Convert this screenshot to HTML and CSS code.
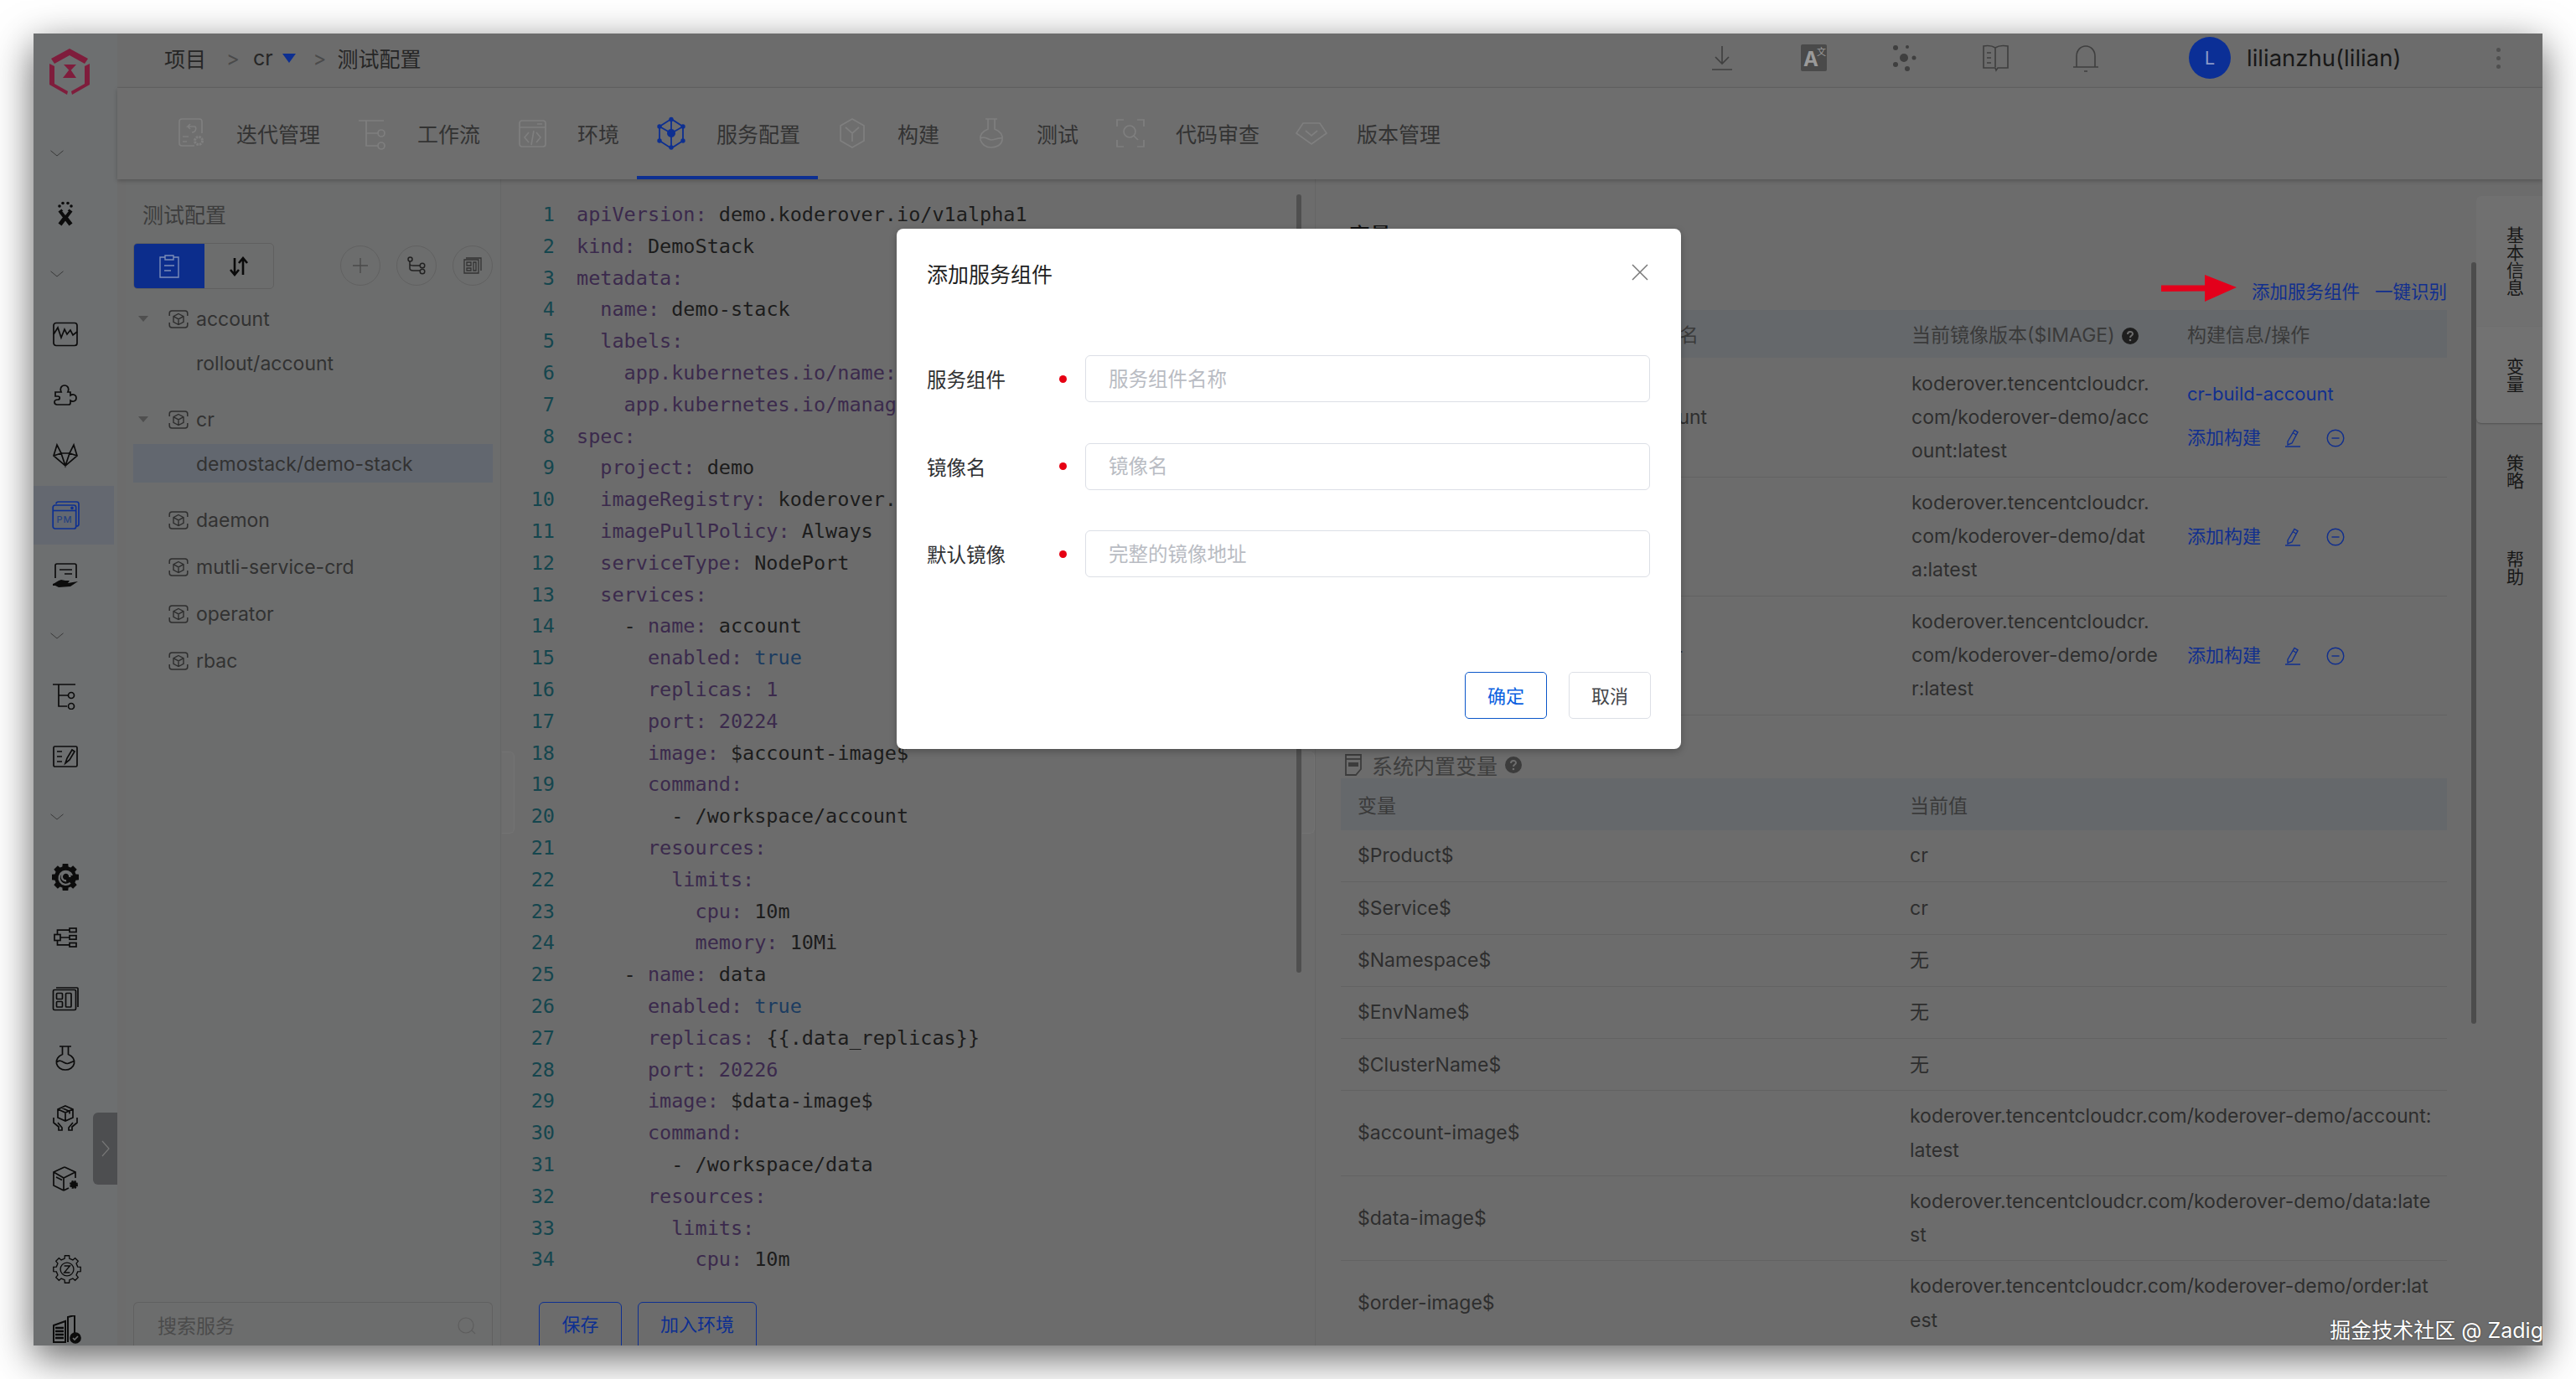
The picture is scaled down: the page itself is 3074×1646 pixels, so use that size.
FILE: index.html
```html
<!DOCTYPE html>
<html lang="zh-CN">
<head>
<meta charset="utf-8">
<title>测试配置</title>
<link rel="stylesheet" href="styles.css">
</head>
<body>
<svg class="defs" aria-hidden="true">
  <symbol id="svc" viewBox="0 0 24 24"><path d="M1.200 8V5a3 3 0 0 1 3-3h15.600a3 3 0 0 1 3 3v3M1.200 16v3a3 3 0 0 0 3 3h15.600a3 3 0 0 0 3-3v-3" fill="none" stroke="currentColor" stroke-width="1.500"/><path d="M12 5.500l6 3.200v6.600L12 18.500l-6-3.200V8.700zM6 8.700l6 3.200 6-3.200M12 11.900v6.600" fill="none" stroke="currentColor" stroke-width="1.400"/></symbol>
  <symbol id="chev" viewBox="0 0 16 8"><path d="M.5.8L8 7l7.500-6.200" fill="none" stroke="currentColor" stroke-width="1"/></symbol>
  <symbol id="pen" viewBox="0 0 22 24"><path d="M5 16L13 2.500l4 2.300L10 18l-5 2zM11 5.500l4 2.500M2 22h18" fill="none" stroke="currentColor" stroke-width="1.400"/></symbol>
  <symbol id="minus" viewBox="0 0 22 22"><circle cx="11" cy="11" r="9.800" fill="none" stroke="currentColor" stroke-width="1.400"/><path d="M6.500 11h9" stroke="currentColor" stroke-width="1.400"/></symbol>
  <symbol id="help" viewBox="0 0 20 20"><circle cx="10" cy="10" r="10" fill="currentColor"/><path d="M7 8c0-4 6-4 6-.5 0 2-3 2-3 4.500" fill="none" stroke="#6d6d6d" stroke-width="2"/><circle cx="10" cy="15" r="1.300" fill="#6d6d6d"/></symbol>
</svg>

<div class="window">
  <aside class="sidebar">
    <div class="logo">
      <svg width="80" height="80" viewBox="0 0 80 80"><path d="M17 20L39 8l22 12-4 6-18-10-18 10zM15 26l6 3v21l16 9-1 4-21-12zM63 26l-6 3v21l-16 9 1 4 21-12zM32 27h15l-7.500 8zM39.500 32l7.500 11H31z" fill="#7f1d3c"/></svg>
    </div>
    <div class="side-item"><svg class="chev" width="16" height="8"><use href="#chev"/></svg></div>
    <div class="side-item"><svg class="side-ic" viewBox="0 0 32 32"><path d="M9.500 12l13 17M22.500 12L9.500 29" stroke="#0c0c0c" stroke-width="5" fill="none"/><path d="M12 13l4 5 4-5z" fill="#6d6f70" stroke="none"/><circle cx="9" cy="7" r="1.800" fill="#0c0c0c" stroke="none"/><circle cx="13" cy="3.500" r="1.800" fill="#0c0c0c" stroke="none"/><circle cx="19" cy="3.500" r="1.800" fill="#0c0c0c" stroke="none"/><circle cx="23" cy="7" r="1.800" fill="#0c0c0c" stroke="none"/></svg></div>
    <div class="side-item"><svg class="chev" width="16" height="8"><use href="#chev"/></svg></div>
    <div class="side-item"><svg class="side-ic" viewBox="0 0 32 32"><rect x="2" y="2.500" width="28" height="27" rx="3"/><path d="M2 16L7 8l4 12 4-10 3 6 4-5 3 6 5-4"/></svg></div>
    <div class="side-item"><svg class="side-ic" viewBox="0 0 32 32"><path d="M4 13h7c-2-4 0-8 4-8s6 4 4 8h3v4c3-2 7-1 7 3s-4 5-7 3v3c0 1-1 2-2 2H6c-2 0-3-1-3-3s2-3 4-3c3 0 3-4 0-4H4z"/></svg></div>
    <div class="side-item"><svg class="side-ic" viewBox="0 0 32 32"><path d="M6 4L2 17l14 12 14-12-4-13-5 10H11zM2 17l9-3 5 15 5-15 9 3"/></svg></div>
    <div class="side-item is-active"><svg class="side-ic side-ic-lg" viewBox="0 0 34 34"><path d="M5 3.500c0-1.500 1-2.500 2.500-2.500h22c1.500 0 2.500 1 2.500 2.500v24c0 1.500-1 2.500-2.500 2.500H28"/><rect x="1.200" y="5" width="27.500" height="28" rx="2.500" fill="#636871"/><path d="M1.200 11.500h27.500" stroke-width="1.600"/><circle cx="24" cy="8.300" r="1"/><text x="15" y="26" class="pm">PM</text></svg></div>
    <div class="side-item"><svg class="side-ic" viewBox="0 0 32 32"><path d="M4 19V4c0-1 1-2 2-2h21c1 0 2 1 2 2v15M9 9h15M15 14h9"/><path d="M1 26c3-1 6-4 10-5l5 1h5l-2 3 12-2-9 6-14 1-4-2H1z" fill="#0c0c0c" stroke="none"/></svg></div>
    <div class="side-item"><svg class="chev" width="16" height="8"><use href="#chev"/></svg></div>
    <div class="side-item"><svg class="side-ic" viewBox="0 0 32 32"><path d="M1 2h27M8 2v26h10M8 15h11"/><circle cx="23" cy="15" r="3.500"/><circle cx="23" cy="28" r="3.500"/></svg></div>
    <div class="side-item"><svg class="side-ic" viewBox="0 0 32 32"><rect x="2" y="4" width="28" height="24" rx="1.500"/><path d="M6 10h6M6 16h6M6 22h6M16 24l2-6L24 8l3 2-6 10z"/></svg></div>
    <div class="side-item"><svg class="chev" width="16" height="8"><use href="#chev"/></svg></div>
    <div class="side-item"><svg class="side-ic" viewBox="0 0 30 30"><polygon class="fill-dark" points="26.200,12.400 29.300,12.700 29.300,17.300 26.200,17.600 24.750,21.100 26.700,23.500 23.500,26.700 21.100,24.750 17.600,26.200 17.300,29.300 12.700,29.300 12.400,26.200 8.900,24.750 6.500,26.700 3.300,23.500 5.250,21.100 3.800,17.600 .7,17.300 .7,12.700 3.800,12.400 5.250,8.900 3.300,6.500 6.500,3.300 8.900,5.250 12.400,3.800 12.700,.7 17.300,.7 17.600,3.800 21.100,5.250 23.500,3.300 26.700,6.500 24.750,8.900"/><circle cx="15" cy="15" r="7.800" class="fill-dark"/><path d="M22.500 13a7.500 7.500 0 1 0-2 8.500M20 15a4.500 4.500 0 1 0-4 4" stroke="#6d6f70" stroke-width="2.200"/></svg></div>
    <div class="side-item"><svg class="side-ic side-ic-tree" viewBox="0 0 28 24"><rect x="1" y="8.500" width="7" height="7"/><rect x="19" y="1" width="8" height="4.500"/><rect x="19" y="9.700" width="8" height="4.500"/><rect x="19" y="18.500" width="8" height="4.500"/><path d="M4.500 8.500V3.200H19M8 12h11M4.500 15.500v5.300H19"/></svg></div>
    <div class="side-item"><svg class="side-ic" viewBox="0 0 32 30"><path d="M5 3h25c.6 0 1 .4 1 1v22"/><rect x="1.500" y="5.500" width="27" height="24" rx="1.500"/><rect x="5.500" y="9.500" width="7" height="7" rx="1"/><rect x="5.500" y="19.500" width="7" height="6.500" rx="1"/><rect x="16.500" y="9.500" width="6.500" height="16.500" rx="1"/></svg></div>
    <div class="side-item"><svg class="side-ic" viewBox="0 0 32 32"><path d="M9 2h14M12.500 2v9.500C7.500 13.500 4.500 18 5.500 22.500 6.500 27 11 30 16 30s9.500-3 10.500-7.500c1-4.500-2-9-7-11V2M5.500 21c5-5 9 2 13 1.500 3-.4 5-2 8-3"/></svg></div>
    <div class="side-item"><svg class="side-ic" viewBox="0 0 32 32"><path d="M16 1l9 4v10l-9 4-9-4V5zM7 5l9 4 9-4M16 9v10M12 3.500l9 4v3"/><path d="M2 15v6l6 5v4h4v-3l-5-6M30 15v6l-6 5v4h-4v-3l5-6"/></svg></div>
    <div class="side-item"><svg class="side-ic" viewBox="0 0 32 32"><path d="M15 2l13 6v7M14 30L2 24V8l13-6M2 8l12 7 14-7M14 15v15M5 14l7 3.500M14 30l6-3"/><circle cx="26" cy="23" r="3.800" class="fill-dark" stroke-dasharray="2 1" stroke-width="2.500"/></svg></div>
    <div class="side-item side-gear"><svg class="side-ic side-ic-xl" viewBox="0 0 30 30"><polygon stroke-width="1.200" points="26.200,12.400 29.300,12.700 29.300,17.300 26.200,17.600 24.750,21.100 26.700,23.500 23.500,26.700 21.100,24.750 17.600,26.200 17.300,29.300 12.700,29.300 12.400,26.200 8.900,24.750 6.500,26.700 3.300,23.500 5.250,21.100 3.800,17.600 .7,17.300 .7,12.700 3.800,12.400 5.250,8.900 3.300,6.500 6.500,3.300 8.900,5.250 12.400,3.800 12.700,.7 17.300,.7 17.600,3.800 21.100,5.250 23.500,3.300 26.700,6.500 24.750,8.900"/><circle cx="15" cy="15" r="7" stroke-width="1.200"/><path d="M12 11.500h6l-6 7h6" stroke-width="1.200"/></svg></div>
    <div class="side-item"><svg class="side-ic side-ic-xl" viewBox="0 0 34 34"><path d="M1 12l14-5v25H1zM18 32V2l8-2v22" fill="none" stroke-width="2"/><path d="M3 15h10M3 19h10M3 23h10M3 27h10" stroke-width="2.500"/><circle cx="27" cy="27" r="6" class="fill-dark"/><path d="M24 27l2 2 4-4" stroke="#6d6f70" stroke-width="1.600"/></svg></div>
    <div class="collapse"><svg width="12" height="22" viewBox="0 0 12 22"><path d="M2 2l8 9-8 9" fill="none" stroke="#777" stroke-width="1.200"/></svg></div>
  </aside>

  <div class="main">
    <header class="topbar">
      <nav class="crumbs">
        <span>项目</span><span class="sep sep-a">&gt;</span><span class="crumb-cr">cr</span><span class="tri"></span><span class="sep sep-b">&gt;</span><span>测试配置</span>
      </nav>
      <div class="top-tools">
        <svg class="tool" viewBox="0 0 40 40"><path d="M20 6v21M12 19l8 8 8-8M8 34h24"/></svg>
        <svg class="tool" viewBox="0 0 40 40"><rect x="5" y="4" width="31" height="32" rx="2" fill="#4a4a4a" stroke="none"/><text x="8" y="30" class="tool-a">A</text><text x="24" y="17" class="tool-b">文</text></svg>
        <svg class="tool tool-fill" viewBox="0 0 40 40"><circle cx="20" cy="20" r="5"/><circle cx="10" cy="8" r="3"/><circle cx="24" cy="7" r="2"/><circle cx="32" cy="20" r="2.500"/><circle cx="10" cy="28" r="3"/><circle cx="24" cy="33" r="3"/></svg>
        <svg class="tool" viewBox="0 0 40 40"><path d="M20 8c-3-2-8-3-14-2v26h14l1 3 2-3h12V6c-6-1-12 0-15 2zM20 8v23M10 14h5M10 20h5M10 26h5"/></svg>
        <svg class="tool" viewBox="0 0 40 40"><path d="M5 31h30M9 31V18c0-7 5-12 11-12s11 5 11 12v13M18 36h4"/></svg>
      </div>
      <div class="user">
        <span class="avatar">L</span>
        <span class="user-name">lilianzhu(lilian)</span>
        <span class="kebab"><i></i><i></i><i></i></span>
      </div>
    </header>

    <nav class="tabs">
      <a class="tab"><svg viewBox="0 0 40 40"><path d="M24 35H9c-2 0-3-1-3-3V6c0-2 1-3 3-3h21c2 0 3 1 3 3v14"/><path d="M25 12H16l3-3M16 12l3 3M25 12c2 3 0 7-4 7M10 24h7M10 30h5"/><circle cx="29" cy="29" r="4.500" stroke-width="3" stroke-dasharray="2.500 1"/></svg>迭代管理</a>
      <a class="tab"><svg viewBox="0 0 40 40"><path d="M4 5h30M13 5v30h14M13 20h15"/><circle cx="31" cy="20" r="4"/><circle cx="31" cy="35" r="4"/></svg>工作流</a>
      <a class="tab"><svg viewBox="0 0 40 40"><rect x="5" y="5" width="31" height="31" rx="3"/><path d="M5 13h31M26 9h6M16 19l-5 6 5 6M25 19l5 6-5 6M22 17l-3 17"/></svg>环境</a>
      <a class="tab tab-on"><svg viewBox="0 0 40 40"><path d="M20 3l14 9v17l-14 9-14-9V12zM20 3v13M6 12l14 8 14-8M20 20v18" stroke-width="1.800"/><circle cx="20" cy="3.500" r="2.700"/><circle cx="34" cy="12" r="2.700"/><circle cx="34" cy="29" r="2.700"/><circle cx="20" cy="37" r="2.700"/><circle cx="6" cy="29" r="2.700"/><circle cx="6" cy="12" r="2.700"/><circle cx="20" cy="20" r="5"/></svg>服务配置</a>
      <a class="tab"><svg viewBox="0 0 40 40"><path d="M20 3l14 8v18l-14 8-14-8V11zM12 13l8 7 8-7M20 20v10"/></svg>构建</a>
      <a class="tab"><svg viewBox="0 0 40 40"><path d="M13 3h14M16 3v12C9 18 6 23 7 28c2 6 7 9 13 9s12-3 13-9c1-5-2-10-9-13V3M7 26c6-3 9 2 13 2s8-3 13-2"/></svg>测试</a>
      <a class="tab"><svg viewBox="0 0 40 40"><path d="M12 4H4v8M28 4h8v8M12 36H4v-8M28 36h8v-8"/><circle cx="19" cy="18" r="7"/><path d="M24 23l5 5"/></svg>代码审查</a>
      <a class="tab"><svg viewBox="0 0 40 40"><path d="M10 8h20l8 12-18 13L2 20zM13 17l7 6 7-6"/></svg>版本管理</a>
    </nav>

    <div class="body">
      <section class="tree-panel">
        <h2 class="panel-title">测试配置</h2>
        <div class="toolbar">
          <div class="segment">
            <span class="seg seg-on"><svg width="26" height="30" viewBox="0 0 26 30"><path d="M8 4H2v24h22V4h-6M8 2h10v5H8zM7 14h12M7 20h8" fill="none" stroke="#7c8db8" stroke-width="1.400"/></svg></span>
            <span class="seg"><svg width="24" height="24" viewBox="0 0 24 24"><path d="M7 2v19M2 16l5 6 5-6M17 22V3M12 8l5-6 5 6" fill="none" stroke="#0a0a0a" stroke-width="2.600"/></svg></span>
          </div>
          <div class="round-btns">
            <span class="round"><svg width="20" height="20" viewBox="0 0 20 20"><path d="M10 1v18M1 10h18" stroke="#4a4a4a" stroke-width="1.400"/></svg></span>
            <span class="round"><svg width="22" height="22" viewBox="0 0 22 22"><path d="M3 6v8c0 3 2 3 4 3h8M3 9c0 2 2 2 4 2h8" fill="none" stroke="#222" stroke-width="1.500"/><circle cx="3.500" cy="3.500" r="2.500" fill="none" stroke="#222" stroke-width="1.500"/><circle cx="18" cy="11" r="2.800" fill="none" stroke="#222" stroke-width="1.500"/><circle cx="18" cy="18" r="2.800" fill="none" stroke="#222" stroke-width="1.500"/></svg></span>
            <span class="round"><svg width="22" height="20" viewBox="0 0 22 20"><path d="M3 1h18v15M1 3h17v16H1z" fill="none" stroke="#333" stroke-width="1.300"/><path d="M4 6h5v4H4zM4 13h5v3H4zM12 6h3v10h-3z" fill="none" stroke="#333" stroke-width="1.300"/></svg></span>
          </div>
        </div>
        <div class="tree">
          <div class="tree-head"><span class="caret"></span><svg class="svc-ic"><use href="#svc"/></svg>account</div>
          <div class="tree-leaf">rollout/account</div>
          <div class="tree-head"><span class="caret"></span><svg class="svc-ic"><use href="#svc"/></svg>cr</div>
          <div class="tree-leaf is-selected">demostack/demo-stack</div>
          <div class="tree-head"><span class="caret caret-none"></span><svg class="svc-ic"><use href="#svc"/></svg>daemon</div>
          <div class="tree-head"><span class="caret caret-none"></span><svg class="svc-ic"><use href="#svc"/></svg>mutli-service-crd</div>
          <div class="tree-head"><span class="caret caret-none"></span><svg class="svc-ic"><use href="#svc"/></svg>operator</div>
          <div class="tree-head"><span class="caret caret-none"></span><svg class="svc-ic"><use href="#svc"/></svg>rbac</div>
        </div>
        <div class="search">
          <span>搜索服务</span>
          <svg width="24" height="22" viewBox="0 0 24 22"><circle cx="11" cy="10" r="9" fill="none" stroke="#5d5d5d" stroke-width="1.200"/><path d="M18 16l4 4" stroke="#5d5d5d" stroke-width="1.200"/></svg>
        </div>
      </section>

      <div class="splitter"><span class="split-handle"></span></div>

      <section class="editor">
        <div class="code">
<div class="ln"><b>1</b><code><i>apiVersion:</i> demo.koderover.io/v1alpha1</code></div>
<div class="ln"><b>2</b><code><i>kind:</i> DemoStack</code></div>
<div class="ln"><b>3</b><code><i>metadata:</i></code></div>
<div class="ln"><b>4</b><code>  <i>name:</i> demo-stack</code></div>
<div class="ln"><b>5</b><code>  <i>labels:</i></code></div>
<div class="ln"><b>6</b><code>    <i>app.kubernetes.io/name:</i> demo-stack</code></div>
<div class="ln"><b>7</b><code>    <i>app.kubernetes.io/managed-by:</i> zadig</code></div>
<div class="ln"><b>8</b><code><i>spec:</i></code></div>
<div class="ln"><b>9</b><code>  <i>project:</i> demo</code></div>
<div class="ln"><b>10</b><code>  <i>imageRegistry:</i> koderover.tencentcloudcr.com</code></div>
<div class="ln"><b>11</b><code>  <i>imagePullPolicy:</i> Always</code></div>
<div class="ln"><b>12</b><code>  <i>serviceType:</i> NodePort</code></div>
<div class="ln"><b>13</b><code>  <i>services:</i></code></div>
<div class="ln"><b>14</b><code>    - <i>name:</i> account</code></div>
<div class="ln"><b>15</b><code>      <i>enabled:</i> <u>true</u></code></div>
<div class="ln"><b>16</b><code>      <i>replicas: 1</i></code></div>
<div class="ln"><b>17</b><code>      <i>port: 20224</i></code></div>
<div class="ln"><b>18</b><code>      <i>image:</i> $account-image$</code></div>
<div class="ln"><b>19</b><code>      <i>command:</i></code></div>
<div class="ln"><b>20</b><code>        - /workspace/account</code></div>
<div class="ln"><b>21</b><code>      <i>resources:</i></code></div>
<div class="ln"><b>22</b><code>        <i>limits:</i></code></div>
<div class="ln"><b>23</b><code>          <i>cpu:</i> 10m</code></div>
<div class="ln"><b>24</b><code>          <i>memory:</i> 10Mi</code></div>
<div class="ln"><b>25</b><code>    - <i>name:</i> data</code></div>
<div class="ln"><b>26</b><code>      <i>enabled:</i> <u>true</u></code></div>
<div class="ln"><b>27</b><code>      <i>replicas:</i> {{.data_replicas}}</code></div>
<div class="ln"><b>28</b><code>      <i>port: 20226</i></code></div>
<div class="ln"><b>29</b><code>      <i>image:</i> $data-image$</code></div>
<div class="ln"><b>30</b><code>      <i>command:</i></code></div>
<div class="ln"><b>31</b><code>        - /workspace/data</code></div>
<div class="ln"><b>32</b><code>      <i>resources:</i></code></div>
<div class="ln"><b>33</b><code>        <i>limits:</i></code></div>
<div class="ln"><b>34</b><code>          <i>cpu:</i> 10m</code></div>
        </div>
        <div class="editor-foot">
          <button class="outline-btn btn-save">保存</button>
          <button class="outline-btn btn-join">加入环境</button>
        </div>
        <span class="editor-scroll"></span>
      </section>

      <div class="splitter splitter-right"><span class="split-handle"></span></div>

      <section class="detail">
        <h3 class="detail-title">变量</h3>
        <div class="detail-actions">
          <svg class="red-arrow" width="90" height="32" viewBox="0 0 90 32"><path d="M0 12.500h52V0l38 15-38 17V19.500L0 20z" fill="#e3001b"/></svg>
          <a>添加服务组件</a><a>一键识别</a>
        </div>
        <table class="grid">
          <colgroup><col class="c1"><col class="c2"><col class="c3"><col class="c4"></colgroup>
          <thead><tr><th>服务组件</th><th>Kubernetes 名</th><th>当前镜像版本($IMAGE) <svg class="help"><use href="#help"/></svg></th><th>构建信息/操作</th></tr></thead>
          <tbody>
            <tr class="svc-row"><td>account</td><td>rollout/account</td><td>koderover.tencentcloudcr.<br>com/koderover-demo/acc<br>ount:latest</td><td class="build-cell"><a class="build-name">cr-build-account</a><div class="ops"><a>添加构建</a><svg class="op-pen"><use href="#pen"/></svg><svg class="op-minus"><use href="#minus"/></svg></div></td></tr>
            <tr class="svc-row"><td>data</td><td>rollout/data</td><td>koderover.tencentcloudcr.<br>com/koderover-demo/dat<br>a:latest</td><td><div class="ops"><a>添加构建</a><svg class="op-pen"><use href="#pen"/></svg><svg class="op-minus"><use href="#minus"/></svg></div></td></tr>
            <tr class="svc-row"><td>order</td><td>rollout/order</td><td>koderover.tencentcloudcr.<br>com/koderover-demo/orde<br>r:latest</td><td><div class="ops"><a>添加构建</a><svg class="op-pen"><use href="#pen"/></svg><svg class="op-minus"><use href="#minus"/></svg></div></td></tr>
          </tbody>
        </table>
        <div class="sys-title">
          <svg width="20" height="26" viewBox="0 0 20 26"><path d="M1 1h18v17l-6 7H1z" fill="none" stroke="#3c3c3c" stroke-width="1.800"/><path d="M1 6h18" stroke="#3c3c3c" stroke-width="1.800"/><path d="M4 10h12v5H4z" fill="#3c3c3c"/></svg>
          <span>系统内置变量</span>
          <svg class="help"><use href="#help"/></svg>
        </div>
        <table class="grid grid-sys">
          <colgroup><col class="s1"><col class="s2"></colgroup>
          <thead><tr><th>变量</th><th>当前值</th></tr></thead>
          <tbody>
            <tr><td>$Product$</td><td>cr</td></tr>
            <tr><td>$Service$</td><td>cr</td></tr>
            <tr><td>$Namespace$</td><td>无</td></tr>
            <tr><td>$EnvName$</td><td>无</td></tr>
            <tr><td>$ClusterName$</td><td>无</td></tr>
            <tr><td>$account-image$</td><td>koderover.tencentcloudcr.com/koderover-demo/account:<br>latest</td></tr>
            <tr><td>$data-image$</td><td>koderover.tencentcloudcr.com/koderover-demo/data:late<br>st</td></tr>
            <tr><td>$order-image$</td><td>koderover.tencentcloudcr.com/koderover-demo/order:lat<br>est</td></tr>
          </tbody>
        </table>
        <span class="detail-scroll"></span>
      </section>

      <aside class="side-tabs">
        <a class="side-tab side-tab-long">基本信息</a>
        <a class="side-tab side-tab-on">变量</a>
        <a class="side-tab">策略</a>
        <a class="side-tab">帮助</a>
      </aside>
    </div>
  </div>

  <div class="dialog" role="dialog">
    <div class="dialog-head">
      <span class="dialog-title">添加服务组件</span>
      <svg class="dialog-close" width="20" height="20" viewBox="0 0 20 20"><path d="M1 1l18 18M19 1L1 19" stroke="#777" stroke-width="1.500"/></svg>
    </div>
    <form class="dialog-form">
      <div class="field"><label>服务组件</label><span class="req"></span><input placeholder="服务组件名称"></div>
      <div class="field"><label>镜像名</label><span class="req"></span><input placeholder="镜像名"></div>
      <div class="field"><label>默认镜像</label><span class="req"></span><input placeholder="完整的镜像地址"></div>
    </form>
    <div class="dialog-foot">
      <button class="dlg-btn dlg-ok">确定</button>
      <button class="dlg-btn">取消</button>
    </div>
  </div>

  <div class="watermark">掘金技术社区 @ Zadig</div>
</div>
</body>
</html>
```

FILE: styles.css
```css
* { box-sizing: border-box; }
html, body { margin: 0; height: 100%; background: #fff; overflow: hidden; }
body { font-family: Inter, "Noto Sans CJK SC", sans-serif; color: #2b2b2b; }
.defs { position: absolute; width: 0; height: 0; }
a { color: inherit; }
h2, h3 { margin: 0; font-weight: 400; }

.window {
  position: relative;
  margin: 40px;
  width: 2994px;
  height: 1566px;
  display: flex;
  overflow: hidden;
  background: #6c6c6c;
}
body::before {
  content: "";
  position: fixed;
  left: 40px; top: 40px;
  width: 2994px; height: 1566px;
  box-shadow: 0 14px 44px rgba(0,0,0,.62);
}

/* sidebar */
.sidebar { position: relative; width: 100px; flex: none; background: #6d6f70; display: flex; flex-direction: column; overflow: hidden; }
.logo { height: 107px; flex: none; padding: 10px 0 0 4px; }
.logo svg { display: block; }
.side-item { height: 72px; width: 96px; flex: none; display: flex; align-items: center; padding-left: 22px; color: #2f2f2f; }
.chev { margin-left: -2px; color: #3a3a3a; }
.side-ic { width: 32px; height: 32px; fill: none; stroke: #0c0c0c; stroke-width: 1.700; }
.side-ic-lg { width: 34px; height: 34px; stroke: #0d2f91; }
.side-ic-xl { width: 34px; height: 34px; margin-left: 1px; }
.side-ic-tree { width: 28px; height: 24px; margin-left: 2px; }
.fill-dark { fill: #0c0c0c; }
.pm { font: 500 11px Inter, sans-serif; letter-spacing: 1px; fill: #27427f; stroke: none; text-anchor: middle; }
.is-active { background: #646870; height: 70px; margin: 1px 0; }
.side-gear { margin-top: 36px; }
.collapse { position: absolute; left: 71px; top: 1288px; width: 29px; height: 86px; background: #4d4e50; border-radius: 6px 0 0 6px; display: flex; align-items: center; justify-content: center; }

/* main */
.main { flex: 1; min-width: 0; display: flex; flex-direction: column; }
.topbar { height: 65px; flex: none; display: flex; align-items: center; border-bottom: 1px solid #636363; padding: 0 47px 6px 56px; font-size: 25px; color: #262626; }
.crumbs { display: flex; align-items: center; }
.sep { color: #4a4a4a; font-size: 24px; }
.sep-a { margin: 0 16px 0 24px; }
.sep-b { margin: 0 13px 0 21px; }
.crumb-cr { font-size: 25px; }
.tri { width: 0; height: 0; margin-left: 11px; border: 8px solid transparent; border-top: 11px solid #0d2f91; border-bottom: 0; }
.top-tools { margin-left: auto; display: flex; gap: 68.500px; }
.tool { width: 40px; height: 40px; fill: none; stroke: #3f3f3f; stroke-width: 1.600; }
.tool-fill { fill: #3f3f3f; stroke: none; }
.tool-a { font: 700 24px Inter, sans-serif; fill: #9a9a9a; stroke: none; }
.tool-b { font: 11px "Noto Sans CJK SC", sans-serif; fill: #9a9a9a; stroke: none; }
.user { display: flex; align-items: center; margin-left: 103px; }
.avatar { width: 50px; height: 50px; border-radius: 50%; background: #0b2f96; color: #8a99c8; font-size: 22px; display: flex; align-items: center; justify-content: center; }
.user-name { margin-left: 19px; width: 180px; font-size: 27.500px; white-space: nowrap; color: #181818; }
.kebab { margin-left: 114px; width: 12px; display: flex; flex-direction: column; align-items: center; gap: 5px; }
.kebab i { width: 5px; height: 5px; border-radius: 50%; background: #4f4f4f; }

.tabs { height: 109px; flex: none; display: flex; padding-left: 47px; background: #6e6e6e; box-shadow: 0 2px 5px rgba(0,0,0,.22); position: relative; z-index: 1; font-size: 25px; color: #333; }
.tab { display: flex; align-items: center; gap: 34px; padding: 0 21px 2px; height: 100%; white-space: nowrap; }
.tab svg { width: 40px; height: 40px; fill: none; stroke: #7f7f7f; stroke-width: 1.700; }
.tab-on { border-bottom: 4px solid #0d2f91; padding: 2px 21px 0; }
.tab-on svg { stroke: #0d2f91; fill: none; }
.tab-on svg circle { fill: #0d2f91; stroke: none; }

.body { flex: 1; min-height: 0; display: flex; }

/* tree */
.tree-panel { width: 447px; flex: none; margin-left: 10px; padding: 21px 9px 0; display: flex; flex-direction: column; overflow: hidden; background: #6c6d6d; }
.panel-title { font-size: 25px; line-height: 44px; padding-left: 11px; color: #3d3d3d; }
.toolbar { margin-top: 11px; height: 55px; display: flex; justify-content: space-between; flex: none; }
.segment { width: 168px; display: flex; border: 1px solid #606060; border-radius: 5px; overflow: hidden; }
.seg { flex: 1; display: flex; align-items: center; justify-content: center; }
.seg-on { flex: none; width: 85px; background: #0c2d8c; margin: -1px 0 -1px -1px; }
.round-btns { display: flex; gap: 19px; padding-top: 3px; }
.round { width: 48px; height: 48px; border: 1px solid #616161; border-radius: 50%; display: flex; align-items: center; justify-content: center; }
.tree { margin-top: 7px; font-size: 23px; color: #323232; }
.tree-head { height: 56px; display: flex; align-items: center; padding-top: 1px; }
.caret { width: 0; height: 0; margin-left: 6px; border: 6px solid transparent; border-top: 7px solid #4f4f4f; border-bottom: 0; }
.caret-none { visibility: hidden; }
.svc-ic { width: 24px; height: 24px; margin: 0 9px 0 24px; color: #2e2e2e; }
.tree-leaf { height: 46px; line-height: 49px; margin: 2px 0 16px; padding-left: 75px; }
.is-selected { background: #62676f; }
.search { margin-top: auto; flex: none; height: 52px; margin-left: 0; width: 429px; border: 1px solid #606060; border-bottom: 0; border-radius: 6px 6px 0 0; display: flex; align-items: flex-start; justify-content: space-between; padding: 0 18px 0 28px; color: #4b4b4b; font-size: 23px; line-height: 57px; }
.search svg { margin-top: 17px; }

/* splitter */
.splitter { position: relative; width: 23px; flex: none; border-left: 1px solid #666; }
.splitter-right { width: 17px; border-left: 0; border-right: 1px solid #656565; }
.split-handle { position: absolute; left: 0; top: 683px; width: 16px; height: 98px; border: 1px solid #737373; border-left-color: #6c6c6c; border-radius: 0 6px 6px 0; background: #6e6e6e; }

/* editor */
.editor { position: relative; width: 933px; flex: none; display: flex; flex-direction: column; overflow: hidden; }
.code { flex: 1; min-height: 0; padding-top: 24px; font: 23.500px/37.8px "DejaVu Sans Mono", monospace; color: #1c1c1c; }
.ln { display: flex; gap: 26px; height: 37.8px; white-space: pre; }
.ln b { width: 42px; text-align: right; font-weight: 400; color: #15464e; }
.ln code { font: inherit; }
.ln i { font-style: normal; color: #3b2a4c; }
.ln u { text-decoration: none; color: #1c3c60; }
.editor-foot { flex: none; height: 52px; display: flex; gap: 19px; padding-left: 23px; align-items: flex-start; }
.outline-btn { height: 60px; background: transparent; border: 1px solid #0d2f91; border-radius: 6px; color: #0d2f91; font: 22px/52px Inter, "Noto Sans CJK SC", sans-serif; padding: 0 0 6px; display: block; }
.btn-save { width: 99px; }
.btn-join { width: 142px; }
.editor-scroll { position: absolute; right: 0; top: 18px; width: 6px; height: 929px; border-radius: 3px; background: #4f4f4f; }

/* detail */
.detail { position: relative; flex: 1; min-width: 0; padding: 44px 0 0 30px; overflow: hidden; font-size: 23px; color: #2e2e2e; }
.detail-title { margin-left: 10px; font-size: 25px; line-height: 46px; font-weight: 500; color: #111; height: 46px; }
.detail-actions { margin-top: 10px; height: 56px; width: 1320px; display: flex; justify-content: flex-end; align-items: center; gap: 18px; padding-top: 8px; font-size: 21.500px; color: #112f8e; }
.red-arrow { margin-top: -4px; }
.grid { width: 1320px; border-collapse: collapse; table-layout: fixed; }
.c1 { width: 253px; } .c2 { width: 408px; } .c3 { width: 329px; } .c4 { width: 330px; }
.s1 { width: 659px; } .s2 { width: 661px; }
.grid th { text-align: left; font-weight: 400; height: 57px; padding: 0 0 2px 20px; background: #65686b; color: #3a3a3a; white-space: nowrap; }
.grid td { padding: 2px 0 0 20px; border-bottom: 1px solid #626262; line-height: 39.700px; white-space: nowrap; }
.svc-row td { height: 142px; }
.svc-row .build-cell { padding: 0 0 3px 20px; }
.build-name { display: block; color: #112f8e; font-size: 22px; line-height: 40px; margin-bottom: 13px; }
.ops { display: flex; align-items: center; color: #112f8e; font-size: 22px; }
.op-pen { width: 22px; height: 24px; margin-left: 27px; }
.op-minus { width: 22px; height: 22px; margin-left: 29px; }
.help { width: 20px; height: 20px; vertical-align: -3px; color: #1e1e1e; margin-left: 2px; }
.sys-title { margin-top: 43px; height: 32px; display: flex; align-items: center; gap: 12px; padding-left: 5px; font-size: 25px; color: #3e3e3e; white-space: nowrap; }
.sys-title .help { color: #3c3c3c; margin-left: -3px; }
.grid-sys th { height: 62px; padding-bottom: 0; }
.grid-sys td { height: 62.300px; line-height: 40.500px; padding-top: 0; }
.grid-sys tr:nth-child(n+6) td { height: 101.500px; }
.detail-scroll { position: absolute; right: 0; top: 99px; width: 6px; height: 909px; border-radius: 3px; background: #4c4c4c; }

/* right tabs */
.side-tabs { width: 79px; flex: none; padding-top: 20px; }
.side-tab { display: flex; align-items: center; justify-content: center; width: 100%; height: 115px; padding-left: 11px; writing-mode: vertical-lr; font-size: 21px; line-height: 1; color: #171717; }
.side-tab-long { height: 156px; background: #707070; border-radius: 6px 0 0 0; }
.side-tab-on { background: #727272; box-shadow: 0 1px 2px rgba(0,0,0,.25); border-radius: 0 0 0 6px; }

/* dialog */
.dialog { position: absolute; left: 1030px; top: 233px; width: 936px; height: 621px; padding: 36px; background: #fff; border-radius: 8px; box-shadow: 0 3px 8px rgba(0,0,0,.25); color: #303133; }
.dialog-head { display: flex; justify-content: space-between; align-items: center; height: 36px; padding: 0 3px 2px 0; }
.dialog-title { font-size: 25px; color: #1f1f1f; }
.dialog-close { margin-top: -2px; }
.dialog-form { margin-top: 79px; display: flex; flex-direction: column; gap: 48.500px; }
.field { display: flex; align-items: center; height: 56px; }
.field label { width: 157.500px; font-size: 23.500px; color: #303133; }
.req { width: 9px; height: 9px; border-radius: 50%; background: #e60012; margin-right: 22.500px; }
.field input { width: 674px; height: 56px; border: 1px solid #dcdfe6; border-radius: 6px; padding: 0 27px; font: 23.500px Inter, "Noto Sans CJK SC", sans-serif; background: #fff; outline: none; }
.field input::placeholder { color: #b9bcc3; opacity: 1; }
.dialog-foot { margin-top: 113px; display: flex; justify-content: flex-end; gap: 26px; }
.dlg-btn { width: 98px; height: 56px; background: #fff; border: 1px solid #dcdfe6; border-radius: 5px; font: 22px Inter, "Noto Sans CJK SC", sans-serif; color: #44464a; padding: 0 0 2px; }
.dlg-ok { border-color: #0b57c9; color: #0b5fe0; }

.watermark { position: absolute; right: -1px; bottom: 1px; font-size: 25px; line-height: 34px; color: #fff; white-space: nowrap; text-shadow: 0 0 2px rgba(0,0,0,.5); }
```
